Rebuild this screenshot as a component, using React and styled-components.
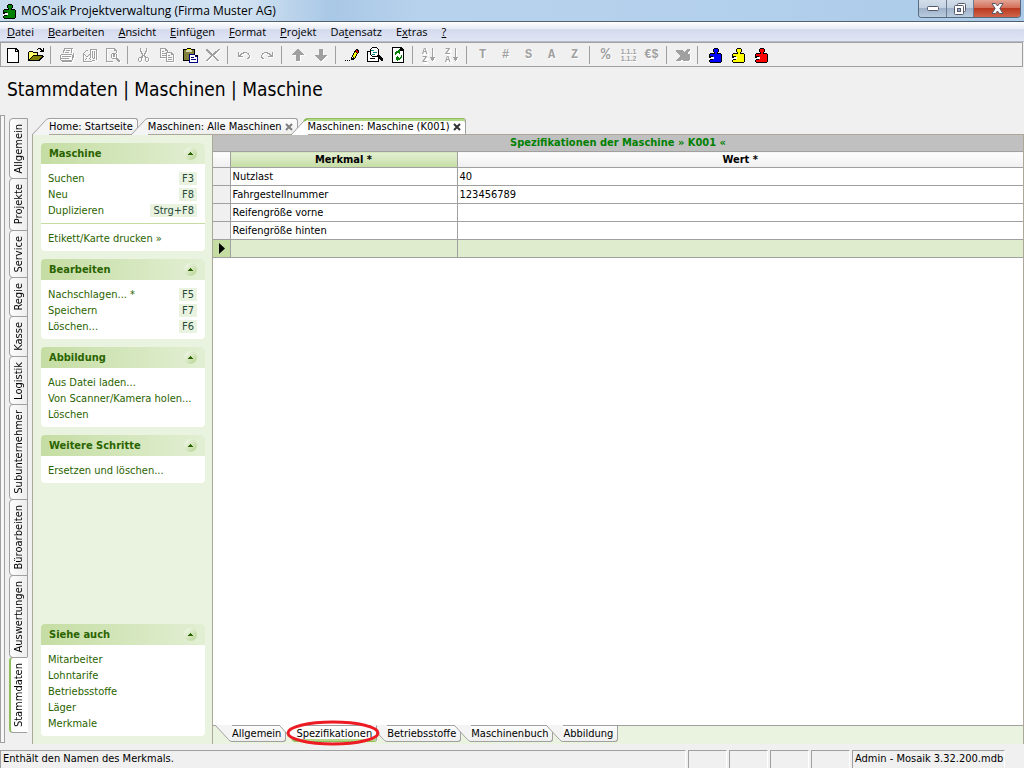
import React, { useState } from "react";
import styled, { createGlobalStyle, css } from "styled-components";

const menuItems = [
  ["", "D", "atei"],
  ["", "B", "earbeiten"],
  ["", "A", "nsicht"],
  ["", "E", "infügen"],
  ["", "F", "ormat"],
  ["", "P", "rojekt"],
  ["Da", "t", "ensatz"],
  ["E", "x", "tras"],
  ["", "?", ""],
];

const areas = ["Allgemein", "Projekte", "Service", "Regie", "Kasse", "Logistik", "Subunternehmer", "Büroarbeiten", "Auswertungen", "Stammdaten"];

const documents = [
  { title: "Home: Startseite" },
  { title: "Maschinen: Alle Maschinen", closable: true },
  { title: "Maschinen: Maschine (K001)", closable: true },
];

const pages = ["Allgemein", "Spezifikationen", "Betriebsstoffe", "Maschinenbuch", "Abbildung"];

const taskGroups = [
  {
    title: "Maschine",
    blocks: [
      [["Suchen", "F3"], ["Neu", "F8"], ["Duplizieren", "Strg+F8"]],
      [["Etikett/Karte drucken »"]],
    ],
  },
  { title: "Bearbeiten", blocks: [[["Nachschlagen... *", "F5"], ["Speichern", "F7"], ["Löschen...", "F6"]]] },
  { title: "Abbildung", blocks: [[["Aus Datei laden..."], ["Von Scanner/Kamera holen..."], ["Löschen"]]] },
  { title: "Weitere Schritte", blocks: [[["Ersetzen und löschen..."]]] },
];

const seeAlso = {
  title: "Siehe auch",
  blocks: [[["Mitarbeiter"], ["Lohntarife"], ["Betriebsstoffe"], ["Läger"], ["Merkmale"]]],
};

const specs = [
  ["Nutzlast", "40"],
  ["Fahrgestellnummer", "123456789"],
  ["Reifengröße vorne", ""],
  ["Reifengröße hinten", ""],
];

const PuzzleIcon = ({ color }) => (
  <svg width="16" height="16" viewBox="0 0 16 16" shapeRendering="crispEdges">
    <path d="M8 1h4v1h1v3h-1v1h3v1h1v8h-1v1H4v-1H3v-3h1v-1H3V7h1V6h4V5H7V2h1z" fill="#000" />
    <path d="M8 2h4v3h-1v2h4v8H4v-2h3v-1h1v-2H7V9H4V7h5V5H8z" fill={color} />
    <path d="M3 11h2v-1h3v2H5v1H3z" fill="#fff" />
    <path d="M3 9h4v1H3zM4 12h3v1H4z" fill="#000" />
  </svg>
);

const icons = {
  neu: (
    <>
      <path d="M2 1h9l3 3v12H2z" fill="#000" />
      <path d="M3 2h7v3h3v10H3zM11 3v1h1z" fill="#fff" />
    </>
  ),
  oeffnen: (
    <>
      <path d="M0 5h1V4h4v1h5v3h5v1h1v1h-1v1h-1v1h-1v1h-1v1H0z" fill="#000" />
      <path d="M1 5h4v1h4v2H5v1H4v1H3v1H2v1H1z" fill="#ff6" />
      <path d="M5 9h9v1h-1v1h-1v1h-1v1H2v-1h1v-1h1v-1h1z" fill="#808000" />
      <path d="M9 2h1V1h3v1h1v1h1V1h1v4h-4V4h1V3h-1V2h-2v1H9z" fill="#000" />
    </>
  ),
  drucken: (
    <>
      <path d="M5 1h9v1h-1v4h-1V2H6v2H5v2H4V3h1zM7 3h4v1H7zM6 5h4v1H6zM2 7h11v1H2zM1 8h1v5H1zM3 9h9v1H3zM13 8h1v5h-1zM14 6h1v5h-1zM2 11h10v1H2zM3 13h10v2H3zM2 13h1v1H2z" />
      <path d="M10 11h2v1h-2z" fill="#fff" />
    </>
  ),
  senden: (
    <>
      <path d="M1 6h1v8H1zM1 14h9v1H1zM2 7h1v1H2zM3 8h1v1H3zM4 9h2v1H4zM6 8h1v1H6zM7 7h1v1H7zM2 5h1V4h1V3h2v1H4v1H3v1H2zM3 12h1v1H3zM4 11h1v1H4zM7 11h1v1H7zM8 12h1v1H8z" />
      <path d="M8 2h7v11h-1V3H9v8H8zM10 4h1v7h-1zM12 4h1v8h-1zM11 11h1v1h-1zM10 13h3v1h-3z" />
    </>
  ),
  vorschau: (
    <path d="M1 1h9v1h1v1h1v3h-1V4H9V2H2v12h6v1H1zM7 6h4v1H7zM6 7h1v4H6zM11 7h1v4h-1zM7 11h4v1H7zM11 11h2v1h1v1h1v2h-2v-1h-1v-1h-1zM8 7h2v3H8z" />
  ),
  schneiden: (
    <path d="M4 1h1v3h1v2h1v2h1V6h1V4h1V1h1v4h-1v2H9v2h1v1h2v1h1v3h-1v1h-2v-1H9v-4H8V9H7v2H6v3H5v1H3v-1H2v-3h1v-1h2V9h1V7H5V5H4zM3 11v3h2v-3zM10 11v3h2v-3z" fillRule="evenodd" />
  ),
  kopieren: (
    <path d="M1 1h6v1h1v1h1v2H8V4H6V2H2v8h5v1H1zM3 4h2v1H3zM3 6h4v1H3zM3 8h4v1H3zM7 5h6v1h1v1h1v8H7zM8 6v8h6V8h-2V6zM9 8h2v1H9zM9 10h4v1H9zM9 12h4v1H9z" fillRule="evenodd" />
  ),
  einfuegen: (
    <>
      <path d="M1 2h4V1h4v1h4v6h3v7H8v-1H1z" fill="#000" />
      <path d="M2 3h10v5H7v5H2z" fill="#80803a" />
      <path d="M4 3h6v2H4z" fill="#d8d8b0" />
      <path d="M5 2h4v1H5z" fill="#ff0" />
      <path d="M7 7h6v1h1v1h1v1h1v6H7z" fill="#000080" />
      <path d="M8 8h5v2h2v5H8z" fill="#fff" />
      <path d="M9 10h3v1H9zM9 12h5v1H9z" fill="#000080" />
    </>
  ),
  loeschen: (
    <path d="M1 2h2v1h1v1h1v1h1v1h1v1h1V6h1V5h1V4h2V3h1V2h2v1h-1v1h-1v1h-1v1h-1v1h-1v1H9v1h1v1h1v1h1v1h1v1h1v1h-2v-1h-1v-1h-1v-1H9v-1H8V9H7v1H6v1H5v1H4v1H3v1H1v-1h1v-1h1v-1h1v-1h1V9h1V8H5V7H4V6H3V5H2V4H1z" />
  ),
  rueckgaengig: <path d="M2 5h1v3h1V7h1V6h2V5h4v1h2v2h1v3h-1v1h-2v-1h1v-1h1V8h-1V7h-1V6H8v1H6v1H5v1h2v1H2z" />,
  wiederholen: <path d="M14 5h-1v3h-1V7h-1V6H9V5H5v1H3v2H2v3h1v1h2v-1H4v-1H3V8h1V7h1V6h3v1h2v1h1v1H9v1h5z" />,
  hoch: <path d="M7 2h2v1h1v1h1v1h1v1h1v1h1v1h-4v6H6V8H2V7h1V6h1V5h1V4h1V3h1z" />,
  runter: <path d="M6 2h4v6h4v1h-1v1h-1v1h-1v1h-1v1H9v1H7v-1H6v-1H5v-1H4v-1H3V9H2V8h4z" />,
  bearbeiten: (
    <>
      <path d="M1 13h1v1H1zM3 13h1v1H3zM5 13h1v1H5zM7 10h1V8h1V6h1V4h1V3h1V2h2v1h1v3h-1v1h-1v2h-1v2h-1v1h-1v1H7z" fill="#000" />
      <path d="M9 8h1V6h1V5h1v1h1v1h-1v2h-1v2h-1v-1H9z" fill="#ff0" />
      <path d="M12 3h1v1h1v2h-1V5h-1z" fill="#f00" />
      <path d="M8 10h1v1H8z" fill="#fff" />
    </>
  ),
  suchen: (
    <>
      <path d="M0 4h3v10h8v-3h1v4H0z" fill="#000" />
      <path d="M1 5h3v4h7v5H1z" fill="#fff" />
      <path d="M5 0h5v1h1v1h1v6h1v1h1v1h1v1h1v3h-2v-1h-1v-1h-1v-1h-1v-1H5V9H4V8H3V2h1V1h1z" fill="#000" />
      <path d="M5 1h5v1h1v6h-1v1H5V8H4V2h1z" fill="#fff" />
      <path d="M4 3h3v1H4zM6 5h4v1H6zM5 7h3v1H5z" fill="#088" />
      <path d="M3 11h5v1H3z" fill="#000" />
    </>
  ),
  aktualisieren: (
    <>
      <path d="M2 0h9l3 3v13H2z" fill="#000" />
      <path d="M3 1h7v3h3v11H3z" fill="#fff" />
      <path d="M5 5h1V4h2V3h1V2h1v5H9V6H7v1H6v1H5zM6 10h1V9h1v5H7v-1H6zM8 10h1v1h1v-1h1V8h1v3h-1v1h-1v1H8z" fill="#008000" />
    </>
  ),
  aufsteigend: (
    <>
      <text x="1" y="7">A</text>
      <text x="1" y="15">Z</text>
      <path d="M11 1h1v9h2v1h-1v2h-1v1h-1v-1h-1v-2H9v-1h2z" />
    </>
  ),
  absteigend: (
    <>
      <text x="1" y="7">Z</text>
      <text x="1" y="15">A</text>
      <path d="M11 1h1v9h2v1h-1v2h-1v1h-1v-1h-1v-2H9v-1h2z" />
    </>
  ),
  excel: (
    <path d="M1 3h7v1h1v1h1V4h1V3h1V2h3v2h-1v1h-1v2h2v6h-1v1H8v-1H6v1H1v-1h1v-1h1v-1h1v-1h1V8H4V7H3V6H2V5H1z" />
  ),
};

const toolbar = [
  [{ icon: "neu", on: true }, { icon: "oeffnen", on: true }],
  [{ icon: "drucken" }, { icon: "senden" }, { icon: "vorschau" }],
  [{ icon: "schneiden" }, { icon: "kopieren" }, { icon: "einfuegen", on: true }, { icon: "loeschen" }],
  [{ icon: "rueckgaengig" }, { icon: "wiederholen" }],
  [{ icon: "hoch" }, { icon: "runter" }],
  [{ icon: "bearbeiten", on: true }, { icon: "suchen", on: true }, { icon: "aktualisieren", on: true }],
  [{ icon: "aufsteigend" }, { icon: "absteigend" }],
  [{ text: "T" }, { text: "#" }, { text: "S" }, { text: "A" }, { text: "Z" }],
  [{ text: "%", large: true }, { lines: ["1.1.1", "1.1.2"] }, { text: "€$" }],
  [{ icon: "excel" }],
  [{ puzzle: "#0000ff" }, { puzzle: "#ffff00" }, { puzzle: "#ff0000" }],
];

function Tool({ tool }) {
  if (tool.puzzle) {
    return <ToolButton aria-label="Modul"><PuzzleIcon color={tool.puzzle} /></ToolButton>;
  }
  if (tool.lines) {
    return (
      <ToolButton disabled>
        <Numbering>{tool.lines.map((line) => <span key={line}>{line}</span>)}</Numbering>
      </ToolButton>
    );
  }
  if (tool.text) {
    return <ToolButton disabled $large={tool.large}>{tool.text}</ToolButton>;
  }
  return (
    <ToolButton disabled={!tool.on} aria-label={tool.icon}>
      <svg width="16" height="16" viewBox="0 0 16 16" fill="currentColor" shapeRendering="crispEdges">
        {icons[tool.icon]}
      </svg>
    </ToolButton>
  );
}

function TaskGroup({ group }) {
  const [open, setOpen] = useState(true);

  return (
    <Group>
      <GroupHeader type="button" aria-expanded={open} onClick={() => setOpen(!open)}>
        {group.title}
        <Chevron>
          <svg width="7" height="4" viewBox="0 0 7 4" shapeRendering="crispEdges">
            <path d="M3 0h1v1h1v1h1v1H1V2h1V1h1z" fill="#2a6400" />
          </svg>
        </Chevron>
      </GroupHeader>
      {open && group.blocks.map((block, i) => (
        <GroupBlock key={i}>
          {block.map(([label, key]) => (
            <Task type="button" key={label}>
              {label}
              {key && <kbd>{key}</kbd>}
            </Task>
          ))}
        </GroupBlock>
      ))}
    </Group>
  );
}

function Slant({ active, bottom }) {
  return (
    <SlantSvg width="17" height="17" viewBox="0 0 17 17" $bottom={bottom}>
      <path d="M0 17L13.5 2.5Q15 .5 17 .5V17z" fill={active ? "#fff" : "#f4f4f4"} />
      <path d="M0 17L13.5 2.5Q15 .5 17 .5" fill="none" stroke="#a0a0a0" />
      {active && <path d="M13 3Q15 1 17 1" fill="none" stroke="#8fbf5a" strokeWidth="2" />}
    </SlantSvg>
  );
}

function App() {
  const [area, setArea] = useState("Stammdaten");
  const [doc, setDoc] = useState(2);
  const [page, setPage] = useState("Spezifikationen");

  return (
    <Window>
      <GlobalStyle />
      <TitleBar>
        <PuzzleIcon color="#008000" />
        <span>MOS'aik Projektverwaltung (Firma Muster AG)</span>
        <WindowButtons>
          <WindowButton aria-label="Minimieren">
            <svg width="12" height="5"><rect x=".5" y=".5" width="11" height="4" rx="1" fill="#fff" stroke="#55596b" /></svg>
          </WindowButton>
          <WindowButton aria-label="Wiederherstellen">
            <svg width="12" height="12" fill="#fff" stroke="#55596b">
              <rect x="3.500" y=".5" width="8" height="8" rx="1" />
              <rect x=".5" y="2.500" width="9" height="9" rx="1" />
              <rect x="3.500" y="5.500" width="3" height="3" fill="#9bb0c8" />
            </svg>
          </WindowButton>
          <WindowButton $close aria-label="Schließen">
            <svg width="13" height="11" viewBox="0 0 13 11">
              <path d="M1 .5h3.500l2 2.500 2-2.500H12L8.800 5.500l3.200 5H8.500l-2-2.500-2 2.500H1l3.200-5z" fill="#fff" stroke="#55596b" />
            </svg>
          </WindowButton>
        </WindowButtons>
      </TitleBar>

      <MenuBar>
        {menuItems.map(([before, letter, after]) => (
          <MenuItem type="button" key={letter + after}>{before}<u>{letter}</u>{after}</MenuItem>
        ))}
      </MenuBar>

      <ToolBar>
        {toolbar.map((tools, i) => (
          <ToolGroup key={i}>
            {tools.map((tool, j) => <Tool key={j} tool={tool} />)}
          </ToolGroup>
        ))}
      </ToolBar>

      <Heading>Stammdaten | Maschinen | Maschine</Heading>

      <Body>
        <Gripper />
        <AreaTabs>
          {areas.map((name) => (
            <AreaTab type="button" key={name} $active={name === area} onClick={() => setArea(name)}>
              <span>{name}</span>
            </AreaTab>
          ))}
        </AreaTabs>

        <Main>
          <Tabs>
            {documents.map((item, i) => (
              <Tab type="button" key={item.title} $active={i === doc} onClick={() => setDoc(i)}>
                <Slant active={i === doc} />
                <TabLabel $active={i === doc}>
                  {item.title}
                  {item.closable && (
                    <svg width="8" height="8" viewBox="0 0 8 8">
                      <path d="M1 1l6 6M7 1L1 7" stroke={i === doc ? "#333" : "#808080"} strokeWidth="2" />
                    </svg>
                  )}
                </TabLabel>
              </Tab>
            ))}
          </Tabs>

          <Workspace>
            <TaskPane>
              {taskGroups.map((group) => <TaskGroup key={group.title} group={group} />)}
              <Spacer />
              <TaskGroup group={seeAlso} />
            </TaskPane>

            <Content>
              <Caption>Spezifikationen der Maschine » K001 «</Caption>
              <Sheet>
                <Grid>
                  <thead>
                    <tr>
                      <MarkerHead aria-label="Zeile" />
                      <ColumnHead $current>Merkmal *</ColumnHead>
                      <ColumnHead>Wert *</ColumnHead>
                    </tr>
                  </thead>
                  <tbody>
                    {specs.map(([name, value]) => (
                      <Row key={name}>
                        <td />
                        <td>{name}</td>
                        <td>{value}</td>
                      </Row>
                    ))}
                    <Row $current>
                      <td>
                        <svg width="6" height="11" viewBox="0 0 6 11"><path d="M0 0l6 5.500L0 11z" /></svg>
                      </td>
                      <td />
                      <td />
                    </Row>
                  </tbody>
                </Grid>
              </Sheet>
              <PageTabs>
                {pages.map((name) => (
                  <Tab type="button" key={name} $active={name === page} onClick={() => setPage(name)}>
                    <Slant bottom active={name === page} />
                    <TabLabel $bottom $active={name === page}>{name}</TabLabel>
                    {name === "Spezifikationen" && (
                      <Marker viewBox="0 0 94 26">
                        <ellipse cx="47" cy="13" rx="45" ry="11" />
                      </Marker>
                    )}
                  </Tab>
                ))}
              </PageTabs>
            </Content>
          </Workspace>
        </Main>
      </Body>

      <StatusBar>
        <StatusCell $grow>Enthält den Namen des Merkmals.</StatusCell>
        <StatusCell />
        <StatusCell />
        <StatusCell />
        <StatusCell />
        <StatusCell $wide>Admin - Mosaik 3.32.200.mdb</StatusCell>
      </StatusBar>
    </Window>
  );
}

export default App;

const GlobalStyle = createGlobalStyle`
  * {
    box-sizing: border-box;
  }
  body {
    margin: 0;
    font-family: "DejaVu Sans Condensed", "DejaVu Sans", sans-serif;
    font-size: 11px;
    line-height: 16px;
    color: #000;
  }
  button {
    margin: 0;
    padding: 0;
    border: 0;
    background: none;
    font: inherit;
    color: inherit;
  }
  svg {
    display: block;
    flex: none;
  }
`;

const Window = styled.div`
  display: flex;
  flex-direction: column;
  height: 100vh;
  overflow: hidden;
  background: #f0f0f0;
`;

const TitleBar = styled.header`
  display: flex;
  align-items: center;
  gap: 5px;
  height: 22px;
  flex: none;
  border-bottom: 1px solid #50606e;
  background: linear-gradient(90deg, #c8dcef 0, #d3e3f2 240px, #a9c8e6 330px, #b7d2ec 420px, #b3d0ec 70%, #abcbe8 100%);
  font-family: "Open Sans", "Noto Sans", sans-serif;
  font-size: 12px;
`;

const WindowButtons = styled.div`
  display: flex;
  align-self: flex-start;
  margin-left: auto;
  margin-right: 3px;
  border: 1px solid #56697f;
  border-top: 0;
  border-radius: 0 0 4px 4px;
  overflow: hidden;
`;

const WindowButton = styled.button`
  display: flex;
  align-items: center;
  justify-content: center;
  width: 27px;
  height: 17px;
  background: linear-gradient(#d3deea, #c3d1e1 45%, #9fb2c9 50%, #b9cbdf);

  & + & {
    border-left: 1px solid #6b7c92;
  }
  ${({ $close }) => $close && css`
    width: 47px;
    background: linear-gradient(#e3a494, #d4705c 45%, #b93a20 50%, #d0654a);
  `}
`;

const MenuBar = styled.nav`
  display: flex;
  height: 20px;
  flex: none;
  border-bottom: 1px solid #b5bacd;
  background: linear-gradient(#fff, #e8ecf6 35%, #d5dbee 40%, #e0e5f5);
  font-family: "Open Sans", "Noto Sans", sans-serif;
`;

const MenuItem = styled.button`
  padding: 0 7px;
`;

const ToolBar = styled.div`
  display: flex;
  height: 25px;
  flex: none;
  margin-right: 1px;
  border: 1px solid #a0a0a0;
`;

const ToolGroup = styled.div`
  display: flex;

  & + & {
    padding-left: 8px;
    background: linear-gradient(#a0a0a0, #a0a0a0) 3px 3px / 1px 18px no-repeat;
  }
`;

const ToolButton = styled.button`
  display: flex;
  align-items: center;
  justify-content: center;
  width: 23px;
  height: 23px;
  font-family: "Liberation Mono", monospace;
  font-size: ${({ $large }) => ($large ? "16px" : "12px")};
  font-weight: bold;

  &:disabled {
    color: #a0a0a0;
    text-shadow: 1px 1px 0 #fff;
  }
  &:disabled svg {
    filter: drop-shadow(1px 1px 0 #fff);
  }
  svg {
    overflow: visible;
  }
  text {
    font-size: 9px;
  }
`;

const Numbering = styled.span`
  display: flex;
  flex-direction: column;
  font-family: "Liberation Sans", sans-serif;
  font-size: 7px;
  line-height: 7px;
`;

const Heading = styled.h1`
  flex: none;
  margin: 0;
  padding: 9px 7px 16px;
  font-size: 19px;
  font-weight: normal;
  line-height: 26px;
`;

const Body = styled.div`
  display: flex;
  flex: 1;
  min-height: 0;
`;

const Gripper = styled.div`
  width: 5px;
  margin-bottom: 1px;
  margin-top: -3px;
  border: 1px solid #a0a0a0;
  background: #f7f7f7;
`;

const AreaTabs = styled.div`
  display: flex;
  flex-direction: column;
  width: 19px;
  margin-left: 4px;
`;

const AreaTab = styled.button`
  display: flex;
  flex: none;
  justify-content: center;
  padding: 5px 0 5px 1px;
  border: 1px solid #a0a0a0;
  border-radius: 4px 0 0 4px;
  background: linear-gradient(90deg, #fdfdfd, #ededed);

  & + & {
    margin-top: -1px;
  }
  span {
    writing-mode: vertical-rl;
    transform: rotate(180deg);
  }
  ${({ $active }) => $active && css`
    border-left: 2px solid #8fbf5a;
    border-right-color: #fff;
    padding-left: 0;
    background: #fff;
  `}
`;

const Main = styled.div`
  display: flex;
  flex: 1;
  flex-direction: column;
  min-width: 0;
  margin-left: 4px;
`;

const Tabs = styled.div`
  display: flex;
  height: 16px;
  flex: none;
`;

const Tab = styled.button`
  position: relative;
  z-index: ${({ $active }) => ($active ? 1 : 0)};
  display: flex;
  height: 17px;

  & + & {
    margin-left: -7px;
  }
`;

const SlantSvg = styled.svg`
  transform: ${({ $bottom }) => ($bottom ? "scaleY(-1)" : "none")};
`;

const TabLabel = styled.span`
  display: flex;
  align-items: center;
  gap: 3px;
  height: 17px;
  padding: 0 4px 0 0;
  border: 1px solid #a0a0a0;
  border-left: 0;
  border-radius: ${({ $bottom }) => ($bottom ? "0 0 3px 0" : "0 3px 0 0")};
  ${({ $bottom }) => ($bottom ? "border-top-color: transparent;" : "border-bottom-color: transparent;")}
  background: ${({ $active }) => ($active ? "#fff" : "linear-gradient(#fdfdfd, #eee)")};
  background-clip: padding-box;
  ${({ $active, $bottom }) => $active && css`
    box-shadow: inset 0 ${$bottom ? "-2px" : "2px"} 0 #b5d88c;
    ${$bottom ? "border-bottom-color" : "border-top-color"}: #8fbf5a;
  `}
`;

const Workspace = styled.div`
  display: flex;
  flex: 1;
  min-height: 0;
  border: 1px solid #aca899;
  border-bottom: 0;
`;

const TaskPane = styled.aside`
  display: flex;
  flex: none;
  flex-direction: column;
  gap: 8px;
  width: 180px;
  padding: 8px 7px 8px 8px;
  border-right: 1px solid #aca899;
  background: #eaf3df;
`;

const Spacer = styled.div`
  flex: 1;
`;

const Group = styled.section`
  overflow: hidden;
  border-radius: 4px;
  background: #fff;
  color: #2a6400;
`;

const GroupHeader = styled.button`
  display: flex;
  align-items: center;
  justify-content: space-between;
  width: 100%;
  height: 21px;
  padding: 0 8px;
  background: linear-gradient(90deg, #c5dda3, #e2efd3);
  font-weight: bold;
`;

const Chevron = styled.span`
  display: flex;
  align-items: center;
  justify-content: center;
  width: 13px;
  height: 13px;
  border-radius: 50%;
  background: linear-gradient(135deg, #eaf3df 20%, #b5d38e);
`;

const GroupBlock = styled.div`
  padding: 7px 8px 4px 7px;

  & + & {
    border-top: 1px solid #c5dda3;
  }
`;

const Task = styled.button`
  display: flex;
  justify-content: space-between;
  width: 100%;
  height: 16px;

  kbd {
    height: 13px;
    margin-top: 1px;
    padding: 0 3px;
    background: #eaf3df;
    font: inherit;
    line-height: 13px;
    color: #264a3c;
  }
`;

const Content = styled.section`
  display: flex;
  flex: 1;
  flex-direction: column;
  min-width: 0;
  background: #eaf3df;
`;

const Caption = styled.h2`
  height: 16px;
  margin: 0;
  background: #c0c0c0;
  font-size: 11px;
  line-height: 16px;
  text-align: center;
  color: #008000;
`;

const Sheet = styled.div`
  flex: 1;
  border-bottom: 1px solid #a0a0a0;
  background: #fff;
`;

const Grid = styled.table`
  width: 100%;
  border-collapse: collapse;
  table-layout: fixed;

  th,
  td {
    border: 1px solid #a0a0a0;
    border-left: 0;
  }
  th:last-child,
  td:last-child {
    border-right: 0;
  }
`;

const ColumnHead = styled.th`
  width: ${({ $current }) => ($current ? "227px" : "auto")};
  height: 16px;
  padding: 0;
  line-height: 15px;
  background: ${({ $current }) => ($current ? "linear-gradient(#e3f0d3, #c5dda3)" : "linear-gradient(#fdfdfd, #efefef)")};
`;

const MarkerHead = styled.th`
  width: 17px;
  padding: 0;
  background: linear-gradient(#fdfdfd, #efefef);
`;

const Row = styled.tr`
  height: 18px;
  background: ${({ $current }) => ($current ? "#dfedce" : "#fff")};

  td {
    padding: 1px 2px 0;
    line-height: 16px;
  }
  td:first-child {
    padding: 0 0 0 6px;
    background: ${({ $current }) => ($current ? "#c5dda3" : "#f0f0f0")};
  }
`;

const PageTabs = styled.div`
  display: flex;
  height: 19px;
  flex: none;
  margin-top: -1px;
  padding-left: 2px;
`;

const Marker = styled.svg`
  position: absolute;
  top: -5px;
  left: 7px;
  width: 94px;
  height: 26px;
  fill: none;
  stroke: #ed1c24;
  stroke-width: 3px;
`;

const StatusBar = styled.footer`
  display: flex;
  gap: 2px;
  flex: none;
  padding: 6px 19px 0 0;
`;

const StatusCell = styled.div`
  width: ${({ $wide }) => ($wide ? "153px" : "39px")};
  height: 18px;
  flex: ${({ $grow }) => ($grow ? 1 : "none")};
  padding: 0 2px;
  border: 1px solid #a0a0a0;
  border-right-color: #fff;
  border-bottom: 0;
  white-space: nowrap;
`;
